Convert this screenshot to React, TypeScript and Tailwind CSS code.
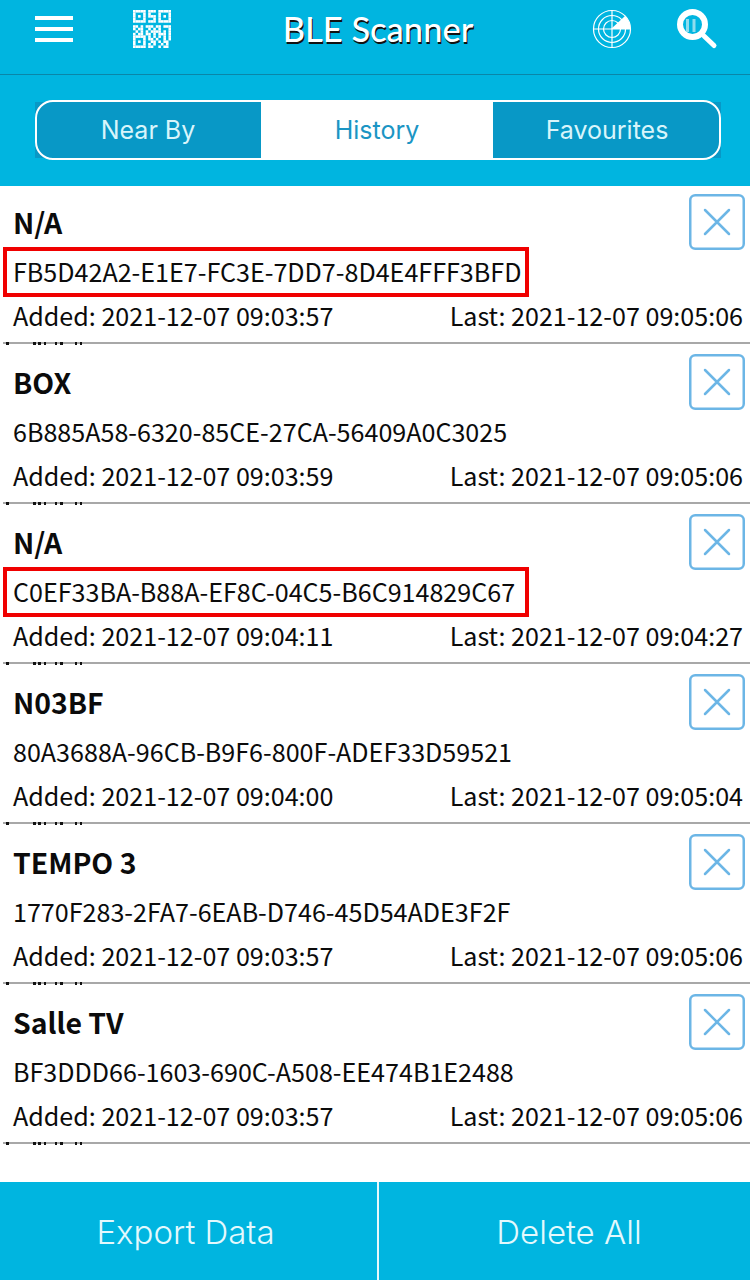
const rows = [
  { name: "N/A", id: "FB5D42A2-E1E7-FC3E-7DD7-8D4E4FFF3BFD", added: "2021-12-07 09:03:57", last: "2021-12-07 09:05:06", marked: true },
  { name: "BOX", id: "6B885A58-6320-85CE-27CA-56409A0C3025", added: "2021-12-07 09:03:59", last: "2021-12-07 09:05:06", marked: false },
  { name: "N/A", id: "C0EF33BA-B88A-EF8C-04C5-B6C914829C67", added: "2021-12-07 09:04:11", last: "2021-12-07 09:04:27", marked: true },
  { name: "N03BF", id: "80A3688A-96CB-B9F6-800F-ADEF33D59521", added: "2021-12-07 09:04:00", last: "2021-12-07 09:05:04", marked: false },
  { name: "TEMPO 3", id: "1770F283-2FA7-6EAB-D746-45D54ADE3F2F", added: "2021-12-07 09:03:57", last: "2021-12-07 09:05:06", marked: false },
  { name: "Salle TV", id: "BF3DDD66-1603-690C-A508-EE474B1E2488", added: "2021-12-07 09:03:57", last: "2021-12-07 09:05:06", marked: false },
];

const qr = [
  "11111.111.11111",
  "1...1.1...1...1",
  "1.1.1.111.1.1.1",
  "1...1...1.1...1",
  "11111.111.11111",
  "...............",
  "11.1.111.11.111",
  "1.11..1.1.1...1",
  ".1.1.1.1111.1.1",
  "1.11.11.1.111.1",
  "11111.1.1.1.1.1",
  "1...1.11.1..1.1",
  "1.1.1..11.1.11.",
  "1...1.1.1..1.1.",
  "11111.11..1.11.",
];

function QrIcon() {
  return (
    <svg width="38" height="38" viewBox="0 0 15 15" fill="#fff">
      {qr.flatMap((line, y) =>
        line.split("").map((c, x) => (c === "1" ? <rect key={`${x}-${y}`} x={x} y={y} width="1.02" height="1.02" /> : null))
      )}
    </svg>
  );
}

function RadarIcon() {
  return (
    <svg width="40" height="40" viewBox="0 0 40 40" fill="none" stroke="#fff" strokeWidth="1.2">
      <circle cx="20" cy="20" r="18.5" />
      <circle cx="20" cy="20" r="13.5" />
      <circle cx="20" cy="20" r="8.5" />
      <path d="M20 1V39M1 20H39" />
      <path d="M19 20L33 7 A18.5 18.5 0 0 1 38.5 20Z" fill="#fff" stroke="none" />
    </svg>
  );
}

function SearchPauseIcon() {
  return (
    <svg width="42" height="42" viewBox="0 0 42 42" fill="none" stroke="#fff">
      <circle cx="15.5" cy="15.5" r="12.5" strokeWidth="6" />
      <path d="M27 27L37 36.5" strokeWidth="5" strokeLinecap="round" />
      <path d="M10.5 10V23M17 10V23" strokeWidth="3" stroke="#8fdcee" />
    </svg>
  );
}

function CloseBox() {
  return (
    <svg width="56" height="56" viewBox="0 0 56 56" fill="none" stroke="#6cb6e6" strokeLinecap="round">
      <rect x="1.25" y="1.25" width="53.5" height="53.5" rx="5" strokeWidth="2.5" />
      <path d="M16 16L40 40M40 16L16 40" strokeWidth="2.5" />
    </svg>
  );
}

function LineMarks() {
  return (
    <svg className="block" width="750" height="4" fill="#a8a8a8">
      <rect x="3" y="0" width="747" height="2" />
      <g fill="#111">
        <rect x="6" y="0" width="3" height="3" />
        <rect x="33" y="0" width="3" height="3" />
        <rect x="38" y="0" width="3" height="3" />
        <rect x="44" y="0" width="2" height="3" />
        <rect x="55" y="0" width="2" height="3" />
        <rect x="60" y="0" width="3" height="3" />
        <rect x="75" y="0" width="2" height="3" />
        <rect x="80" y="0" width="2" height="3" />
      </g>
    </svg>
  );
}

function Row({ row }: { row: (typeof rows)[number] }) {
  return (
    <div className="relative h-[160px] overflow-hidden">
      <div className="h-[156px] pl-[14px] pr-[5px] flex flex-col text-[#0b0b0b]">
        <div className="flex justify-between items-start">
          <div className="pt-[17px] ml-[-1px] text-[28.4px] leading-[38px] font-bold">{row.name}</div>
          <div className="pt-[8px]"><CloseBox /></div>
        </div>
        <div className="mt-[5px] ml-[-1px] text-[25.1px] leading-[32px]">{row.id}</div>
        <div className="mt-[12px] pr-[2px] flex justify-between text-[25.1px] leading-[32px]">
          <span className="ml-[-1px]">Added: {row.added}</span>
          <span>Last: {row.last}</span>
        </div>
      </div>
      <LineMarks />
      {row.marked && (
        <div className="absolute left-[3px] top-[61px] w-[526px] h-[50px] border-[4px] border-[#f00000]" />
      )}
    </div>
  );
}

export default function App() {
  return (
    <div className="w-[750px] h-[1280px] bg-white flex flex-col overflow-hidden font-['Noto_Sans_CJK_JP','Noto_Sans',sans-serif]">
      <header className="h-[186px] bg-[#00b5e0] flex flex-col">
        <div className="h-[75px] flex items-start border-b border-[#0a86a8] relative">
          <div className="ml-[35px] mt-[16px] w-[38px] flex flex-col gap-[7px]">
            <div className="h-[4px] bg-white" />
            <div className="h-[4px] bg-white" />
            <div className="h-[4px] bg-white" />
          </div>
          <div className="ml-[60px] mt-[10px]"><QrIcon /></div>
          <div className="ml-[111px] mt-[7px] w-[192px] text-center text-white font-['Lato',sans-serif] text-[34.5px] leading-[44px] font-medium whitespace-nowrap [text-shadow:1px_2px_0_#111]">
            BLE Scanner
          </div>
          <div className="ml-[118px] mt-[9px]"><RadarIcon /></div>
          <div className="ml-[45px] mt-[9px]"><SearchPauseIcon /></div>
        </div>
        <div className="mt-[25px] ml-[35px] w-[686px] h-[60px] relative flex font-['Inter',sans-serif] text-[25px]">
          <div className="w-[226px] mt-[2px] mb-[2px] pt-[1px] bg-[#0898c6] text-[#d8f5fb] flex items-center justify-center">Near By</div>
          <div className="w-[232px] pt-[1px] bg-white text-[#1b95c4] flex items-center justify-center">History</div>
          <div className="w-[228px] mt-[2px] mb-[2px] pt-[1px] bg-[#0898c6] text-[#d8f5fb] flex items-center justify-center">Favourites</div>
          <div className="absolute inset-0 border-2 border-white rounded-[18px]" />
        </div>
      </header>
      <main className="flex-1 bg-white">
        {rows.map((r, i) => <Row key={i} row={r} />)}
      </main>
      <footer className="h-[98px] bg-[#00b5e0] flex font-['Inter',sans-serif] font-light text-[33px] text-[#e4f9fd]">
        <div className="w-[379px] pt-[3px] border-r-2 border-[#e6f8fc] flex items-center justify-center pr-[6px]">Export Data</div>
        <div className="flex-1 pt-[3px] pl-[9px] flex items-center justify-center">Delete All</div>
      </footer>
    </div>
  );
}
